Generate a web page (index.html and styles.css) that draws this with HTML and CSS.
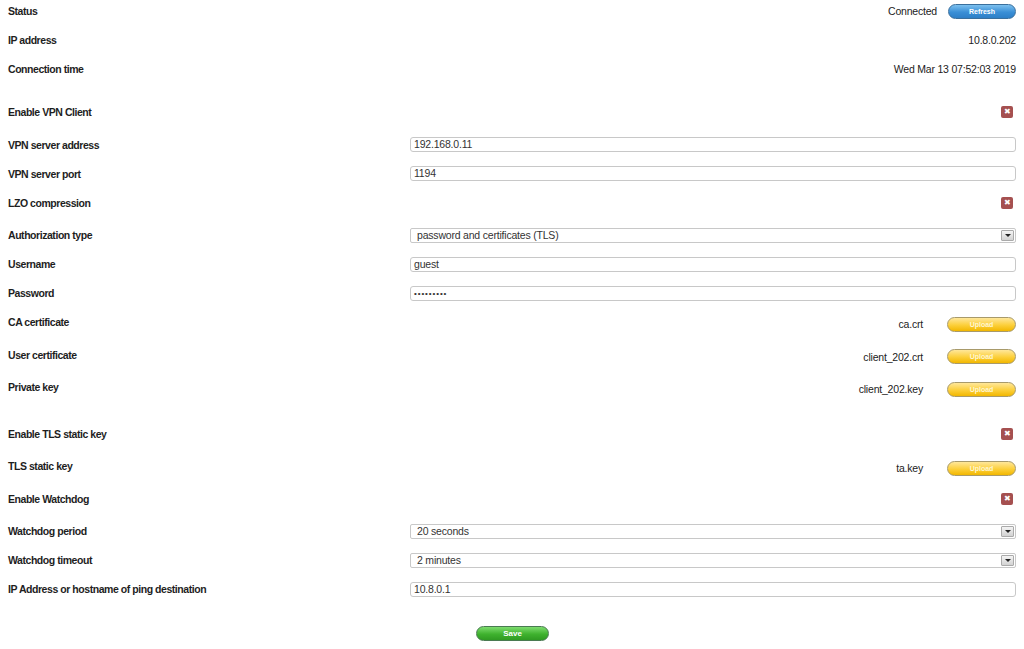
FILE: index.html
```html
<!DOCTYPE html>
<html lang="en">
<head>
  <meta charset="UTF-8" />
  <meta name="viewport" content="width=device-width, initial-scale=1.0"/>
  <title>VPN Client</title>
  <link rel="stylesheet" href="styles.css">
</head>
<body>
  <div class="page">
    <div class="row">
      <span class="label">Status</span>
      <span class="value">Connected <button class="btn blue">Refresh</button></span>
    </div>
    <div class="row">
      <span class="label">IP address</span>
      <span class="value">10.8.0.202</span>
    </div>
    <div class="row">
      <span class="label">Connection time</span>
      <span class="value">Wed Mar 13 07:52:03 2019</span>
    </div>

    <div class="row wide section">
      <span class="label">Enable VPN Client</span>
      <span class="value"><span class="check">&#x2716;</span></span>
    </div>
    <div class="row">
      <span class="label">VPN server address</span>
      <div class="field">192.168.0.11</div>
    </div>
    <div class="row">
      <span class="label">VPN server port</span>
      <div class="field">1194</div>
    </div>
    <div class="row wide">
      <span class="label">LZO compression</span>
      <span class="value"><span class="check">&#x2716;</span></span>
    </div>
    <div class="row">
      <span class="label">Authorization type</span>
      <div class="field select">password and certificates (TLS)<span class="arrow"></span></div>
    </div>
    <div class="row">
      <span class="label">Username</span>
      <div class="field">guest</div>
    </div>
    <div class="row">
      <span class="label">Password</span>
      <div class="field dots">&bull;&bull;&bull;&bull;&bull;&bull;&bull;&bull;&bull;</div>
    </div>
    <div class="row wide">
      <span class="label">CA certificate</span>
      <span class="value file">ca.crt <button class="btn yellow">Upload</button></span>
    </div>
    <div class="row wide">
      <span class="label">User certificate</span>
      <span class="value file">client_202.crt <button class="btn yellow">Upload</button></span>
    </div>
    <div class="row wide">
      <span class="label">Private key</span>
      <span class="value file">client_202.key <button class="btn yellow">Upload</button></span>
    </div>

    <div class="row wide section">
      <span class="label">Enable TLS static key</span>
      <span class="value"><span class="check">&#x2716;</span></span>
    </div>
    <div class="row wide">
      <span class="label">TLS static key</span>
      <span class="value file">ta.key <button class="btn yellow">Upload</button></span>
    </div>
    <div class="row wide">
      <span class="label">Enable Watchdog</span>
      <span class="value"><span class="check">&#x2716;</span></span>
    </div>
    <div class="row">
      <span class="label">Watchdog period</span>
      <div class="field select">20 seconds<span class="arrow"></span></div>
    </div>
    <div class="row">
      <span class="label">Watchdog timeout</span>
      <div class="field select">2 minutes<span class="arrow"></span></div>
    </div>
    <div class="row">
      <span class="label">IP Address or hostname of ping destination</span>
      <div class="field">10.8.0.1</div>
    </div>

    <div class="actions">
      <button class="btn green">Save</button>
    </div>
  </div>
</body>
</html>
```

FILE: styles.css
```css
* {
  box-sizing: border-box;
}
body {
  margin: 0;
  background: #fff;
  color: #222;
  font-family: 'Liberation Sans', Arial, sans-serif;
  font-size: 10.5px;
  letter-spacing: -0.2px;
}
.page {
  display: flex;
  flex-direction: column;
  padding: 0 8px;
}
.row {
  display: flex;
  align-items: center;
  height: 22px;
  margin-bottom: 7px;
}
.row.wide {
  margin-bottom: 10.5px;
}
.section {
  margin-top: 14px;
}
.label {
  width: 402px;
  flex: none;
  font-weight: bold;
  color: #1e1e1e;
  letter-spacing: -0.45px;
}
.value {
  margin-left: auto;
  display: flex;
  align-items: center;
  color: #222;
}
.value.file {
  padding-top: 4px;
}
.field {
  flex: 1;
  height: 15px;
  line-height: 13px;
  border: 1px solid #c8c8c8;
  border-radius: 3px;
  padding: 0 3px;
  color: #333;
  position: relative;
}
.field.dots {
  font-size: 8px;
  letter-spacing: 0.9px;
}
.field.select {
  padding-left: 6px;
  border-radius: 2px;
}
.arrow {
  position: absolute;
  right: 1px;
  top: 1px;
  width: 13px;
  height: 11px;
  background: linear-gradient(#f4f4f4, #d2d2d2);
  border: 1px solid #aaa;
  border-radius: 1px;
}
.arrow::after {
  content: "";
  position: absolute;
  left: 3px;
  top: 3px;
  border-left: 3px solid transparent;
  border-right: 3px solid transparent;
  border-top: 3px solid #222;
}
.check {
  display: inline-block;
  width: 12px;
  height: 12px;
  margin-right: 3px;
  border-radius: 2px;
  background: #a55050;
  color: #fff;
  font-size: 8px;
  line-height: 12px;
  text-align: center;
  letter-spacing: 0;
}
.btn {
  height: 15px;
  border-radius: 8px;
  font-family: 'Liberation Sans', Arial, sans-serif;
  font-size: 7px;
  font-weight: bold;
  color: #fff;
  padding: 0;
  letter-spacing: 0;
  cursor: pointer;
}
.btn.blue {
  width: 68px;
  margin-left: 11px;
  background: linear-gradient(#7cc0ef, #3a8fd6 55%, #2d7fc7);
  border: 1px solid #3a6f9c;
}
.btn.yellow {
  width: 69px;
  margin-left: 24px;
  background: linear-gradient(#ffe79a, #fccf3a 55%, #f2b700);
  border: 1px solid #a89a6a;
  color: #fff6d0;
}
.btn.green {
  width: 73px;
  font-size: 8px;
  background: linear-gradient(#7ddc6e, #3fb22e 55%, #2f9a22);
  border: 1px solid #4a7a52;
}
.actions {
  display: flex;
  justify-content: center;
  margin-top: 19px;
  padding-left: 1px;
}
```
